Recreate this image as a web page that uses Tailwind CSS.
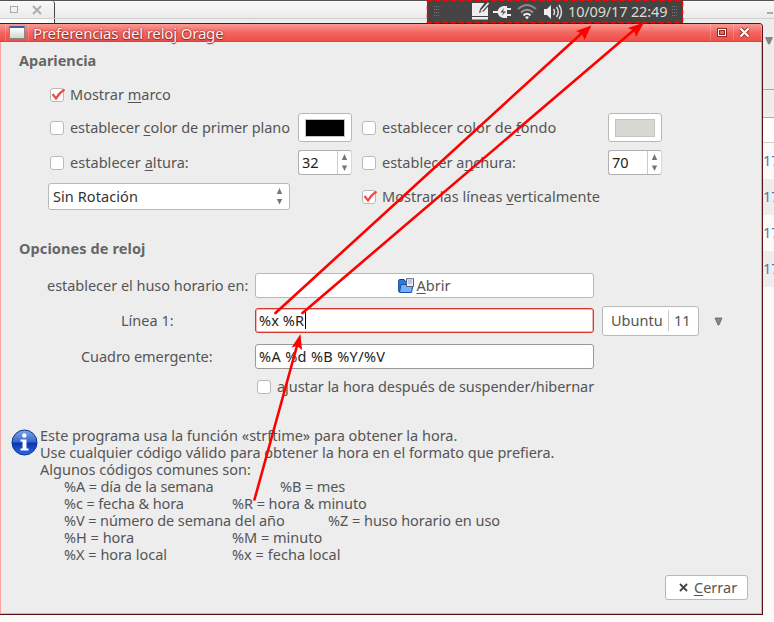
<!DOCTYPE html>
<html lang="es">
<head>
<meta charset="utf-8">
<title>Preferencias del reloj Orage</title>
<script src="https://cdn.jsdelivr.net/npm/@tailwindcss/browser@4"></script>
</head>
<body class="w-[774px] h-[622px] overflow-hidden bg-[#fbfbfb] text-[14.5px] leading-[17px] text-[#555] font-['Noto_Sans','Open_Sans',sans-serif] whitespace-nowrap">
<div class="relative w-[774px] h-[622px] overflow-hidden">

  <!-- windows behind the dialog -->
  <div class="flex flex-col h-[622px]">
    <div class="flex h-[19px] border-t border-[#555] bg-linear-to-b from-[#f9f9f9] to-[#ebebeb] border-b border-b-[#cfcfcf]">
      <div class="flex items-center w-[55px] border-r border-[#444] rounded-tr-[3px]">
        <div class="ml-[10px] w-[8px] h-[7px] border border-[#aaa]"></div>
        <svg class="ml-[14px]" width="10" height="10" viewBox="0 0 10 10" stroke="#aaa" stroke-width="1.8"><path d="M1 1L9 9M9 1L1 9"/></svg>
      </div>
      <div class="ml-auto mt-[11px] mr-[1px] w-[6px] h-[2px] bg-[#aaa]"></div>
    </div>
    <div class="flex flex-1">
      <div class="w-[55px] h-[5px] bg-white border-r border-[#444]"></div>
      <div class="w-[708px] h-[5px] bg-[#ededed]"></div>
      <div class="w-[11px] flex flex-col text-[#5577a0]">
        <div class="h-[71px] bg-[#ededed] border-b border-[#aaa] pt-[18px] pl-[2px]">
          <svg width="8" height="8" viewBox="0 0 8 8"><path d="M.5 .5H7.500L4.500 7H3.500Z" fill="#888" stroke="#666" stroke-width=".6"/></svg>
        </div>
        <div class="h-[28px] bg-[#ededed] border-b border-[#aaa]"></div>
        <div class="h-[25px] bg-white border-b border-[#ccc]"></div>
        <div class="h-[36px] flex items-center pb-px bg-[#fbfbfb] overflow-hidden">17</div>
        <div class="h-[36px] flex items-center pb-px bg-[#ededed] overflow-hidden">17</div>
        <div class="h-[36px] flex items-center pb-px bg-[#fbfbfb] overflow-hidden">17</div>
        <div class="h-[36px] flex items-center pb-px bg-[#ededed] overflow-hidden">17</div>
      </div>
    </div>
  </div>

  <!-- preferences dialog -->
  <div class="absolute left-0 top-[23px] w-[763px] h-[592px] flex flex-col bg-[#ededed] border-t border-r border-b border-[#5a1212] rounded-tr-[4px] overflow-hidden">
    <div class="flex items-center h-[18px] shrink-0 bg-linear-to-b from-[#f99b96] via-[#f3655f] to-[#ee4f48] border-b border-[#d9443e]">
      <div class="ml-[5px] h-[17px] w-[24px] border-x border-white/20 flex items-center pl-[3px]">
        <div class="w-[16px] h-[13px] rounded-[1px] border border-[#888] border-t-2 border-t-[#3465a4] bg-linear-to-b from-white to-[#d5d5d0]"></div>
      </div>
      <span class="ml-[4px] mt-px w-[190px] text-[15px] tracking-[-0.18px] text-[#fff0ee] [text-shadow:0_0_2px_#7d1d18,0_1px_1px_#9c2a24]">Preferencias del reloj Orage</span>
      <div class="ml-auto h-[17px] w-[23px] border-l border-white/20 flex items-center justify-center"><div class="w-[10px] h-[9px] border border-[#8d2a26] bg-white p-px"><div class="w-full h-full border border-[#8d2a26] bg-[#ef625c]"></div></div></div>
      <div class="h-[17px] w-[29px] border-x border-white/20 flex items-center pl-[5px]">
        <svg width="11" height="11" viewBox="0 0 11 11"><path d="M1.500 1.500L9.500 9.500M9.500 1.500L1.500 9.500" stroke="#9c2a24" stroke-width="4"/><path d="M1.500 1.500L9.500 9.500M9.500 1.500L1.500 9.500" stroke="#fff" stroke-width="2.300"/></svg>
      </div>
    </div>

    <div class="flex flex-col flex-1 border-l border-r border-b border-[#fba39f] pl-[18px]">
      <div class="h-[38px] flex items-center pb-[2px] font-bold text-[#666]">Apariencia</div>

      <div class="h-[30px] flex items-center">
        <div class="ml-[31px] w-[14px] h-[14px] rounded-[3px] border border-[#bababa] bg-white"><svg class="overflow-visible" width="12" height="12" viewBox="0 0 12 12" fill="none" stroke="#ee4c47" stroke-width="2.200"><path d="M1.500 5L5 9.500Q8 4 13.500 .5"/></svg></div>
        <span class="ml-[6px] mb-[2px] w-[101px]">Mostrar <u class="underline-offset-2">m</u>arco</span>
      </div>

      <div class="h-[35px] flex items-center">
        <div class="ml-[31px] w-[14px] h-[14px] rounded-[3px] border border-[#bababa] bg-white"></div>
        <span class="ml-[6px] w-[220px] tracking-[-0.06px]">establecer <u class="underline-offset-2">c</u>olor de primer plano</span>
        <div class="ml-[8px] w-[54px] h-[29px] rounded-[3px] border border-[#b8b8b8] bg-white flex items-center justify-center"><div class="w-[40px] h-[18px] border border-[#c5c5c5] bg-black"></div></div>
        <div class="ml-[10px] w-[14px] h-[14px] rounded-[3px] border border-[#bababa] bg-white"></div>
        <span class="ml-[6px] w-[174px] tracking-[0.03px]">establecer color de <u class="underline-offset-2">f</u>ondo</span>
        <div class="ml-[52px] w-[54px] h-[29px] rounded-[3px] border border-[#b8b8b8] bg-white flex items-center justify-center"><div class="w-[40px] h-[18px] border border-[#c5c5c5] bg-[#d8d8d2]"></div></div>
      </div>

      <div class="h-[35px] flex items-center">
        <div class="ml-[31px] w-[14px] h-[14px] rounded-[3px] border border-[#bababa] bg-white"></div>
        <span class="ml-[6px] w-[119px] tracking-[0.04px]">establecer <u class="underline-offset-2">a</u>ltura:</span>
        <div class="ml-[109px] w-[54px] h-[25px] rounded-[3px] border border-[#b0b0b0] border-r-[#d8d8d8] bg-white flex text-[#222]">
          <div class="w-[39px] flex items-center pl-[3px] border-r border-[#ccc]">32</div>
          <svg class="ml-[3px] mt-[3px]" width="7" height="18" viewBox="0 0 7 18" fill="#777"><path d="M3.500 0L6.200 6H.8ZM3.500 17L6.200 11.500H.8Z"/></svg>
        </div>
        <div class="ml-[10px] w-[14px] h-[14px] rounded-[3px] border border-[#bababa] bg-white"></div>
        <span class="ml-[6px] w-[134px]">establecer a<u class="underline-offset-2">n</u>chura:</span>
        <div class="ml-[92px] w-[54px] h-[25px] rounded-[3px] border border-[#b0b0b0] border-r-[#d8d8d8] bg-white flex text-[#222]">
          <div class="w-[39px] flex items-center pl-[3px] border-r border-[#ccc]">70</div>
          <svg class="ml-[3px] mt-[3px]" width="7" height="18" viewBox="0 0 7 18" fill="#777"><path d="M3.500 0L6.200 6H.8ZM3.500 17L6.200 11.500H.8Z"/></svg>
        </div>
      </div>

      <div class="h-[33px] flex items-center">
        <div class="ml-[29px] w-[242px] h-[27px] rounded-[3px] border border-[#b8b8b8] bg-white flex items-center pl-[4px] pr-[6px] text-[#333]">
          <span class="tracking-[0.08px]">Sin Rotación</span>
          <svg class="ml-auto" width="7" height="17" viewBox="0 0 7 17" fill="#777"><path d="M3.500 0L6.200 6H.8ZM3.500 16.500L6.200 11H.8Z"/></svg>
        </div>
        <div class="ml-[72px] w-[14px] h-[14px] rounded-[3px] border border-[#bababa] bg-white"><svg class="overflow-visible" width="12" height="12" viewBox="0 0 12 12" fill="none" stroke="#ee4c47" stroke-width="2.200"><path d="M1.500 5L5 9.500Q8 4 13.500 .5"/></svg></div>
        <span class="ml-[6px] tracking-[0.02px]">Mostrar las líneas <u class="underline-offset-2">v</u>erticalmente</span>
      </div>

      <div class="mt-[21px] h-[30px] flex items-center pb-[2px] font-bold text-[#666] tracking-[0.1px]">Opciones de reloj</div>

      <div class="mt-[3px] h-[37px] flex items-center">
        <span class="ml-[28px] w-[201px] tracking-[-0.03px]">establecer el huso horario en:</span>
        <div class="ml-[7px] w-[339px] h-[25px] rounded-[3px] border border-[#b8b8b8] bg-white flex items-center justify-center gap-[2px]">
          <svg width="17" height="16" viewBox="0 0 17 16"><path d="M.7 13.500V2.500Q.7 1.500 1.700 1.500H6L7.500 3.500H12V13.500Z" fill="#2f78dc" stroke="#0b3f93"/><path d="M1.500 14.500L3 6.500H15L13.500 14.500Z" fill="#74b0fb" stroke="#1650aa"/><path d="M8.500 .7H15.500V8.500H8.500Z" fill="#e8eef5" stroke="#4d6687"/><path d="M10 3H14M10 5H14" stroke="#99a8bd"/></svg>
          <span class="w-[35px]"><u class="underline-offset-2">A</u>brir</span>
        </div>
      </div>

      <div class="h-[34px] flex items-center">
        <span class="ml-[102px] mb-[2px] w-[52px]">Línea 1:</span>
        <div class="ml-[82px] mb-px w-[339px] h-[25px] rounded-[3px] border border-[#d5372f] bg-white shadow-[inset_0_0_0_1px_#f7b5b1] flex items-center pl-[3px] text-[#222]">
          <span class="w-[46px] tracking-[0.1px]">%x %R</span><div class="w-px h-[17px] bg-black"></div>
        </div>
        <div class="ml-[8px] w-[97px] h-[30px] rounded-[3px] border border-[#b8b8b8] bg-white flex items-center pb-px pl-[8px]">
          <span class="w-[51px]">Ubuntu</span>
          <div class="ml-[6px] w-px h-[21px] bg-[#ccc]"></div>
          <span class="ml-[5px] w-[17px]">11</span>
        </div>
        <svg class="ml-[15px]" width="9" height="9" viewBox="0 0 9 9"><path d="M1 1H8L5 8H4Z" fill="#888" stroke="#666" stroke-width=".8"/></svg>
      </div>

      <div class="h-[37px] flex items-center">
        <span class="ml-[62px] w-[132px] tracking-[-0.06px]">Cuadro emergente:</span>
        <div class="ml-[42px] w-[339px] h-[25px] rounded-[3px] border border-[#999] bg-white flex items-center pl-[3px] text-[#222] tracking-[0.35px]">%A %d %B %Y/%V</div>
      </div>

      <div class="h-[24px] flex items-center">
        <div class="ml-[238px] w-[14px] h-[14px] rounded-[3px] border border-[#bababa] bg-white"></div>
        <span class="ml-[6px] mb-px tracking-[-0.06px]">ajustar la hora después de suspender/hibernar</span>
      </div>

      <div class="mt-[28px] -ml-[8px] flex">
        <svg class="mt-[2px] mr-[2px]" width="27" height="27" viewBox="0 0 27 27">
          <defs><linearGradient id="ball" x1="0" y1="0" x2="0" y2="1"><stop offset="0" stop-color="#7fa6e8"/><stop offset=".48" stop-color="#3566cf"/><stop offset=".52" stop-color="#0a35b0"/><stop offset="1" stop-color="#2a6be0"/></linearGradient></defs>
          <circle cx="13.500" cy="13.500" r="12.500" fill="url(#ball)" stroke="#0b2f94"/>
          <circle cx="13.300" cy="6.500" r="2.300" fill="#fff"/><path d="M9.500 10.500H15.500V19.500H17.500V21.500H9.500V19.500H11.500V12.500H9.500Z" fill="#fff"/>
        </svg>
        <div class="flex flex-col">
          <div class="h-[17px] tracking-[-0.02px]">Este programa usa la función «strftime» para obtener la hora.</div>
          <div class="h-[17px] tracking-[-0.045px]">Use cualquier código válido para obtener la hora en el formato que prefiera.</div>
          <div class="h-[17px]">Algunos códigos comunes son:</div>
          <div class="h-[17px] flex pl-[24px] tracking-[-0.12px]"><span class="w-[216px]">%A = día de la semana</span><span>%B = mes</span></div>
          <div class="h-[17px] flex pl-[24px]"><span class="w-[168px] tracking-[-0.12px]">%c = fecha &amp; hora</span><span class="tracking-[-0.06px]">%R = hora &amp; minuto</span></div>
          <div class="h-[17px] flex pl-[24px]"><span class="w-[264px] tracking-[-0.1px]">%V = número de semana del año</span><span class="tracking-[-0.04px]">%Z = huso horario en uso</span></div>
          <div class="h-[17px] flex pl-[24px]"><span class="w-[168px]">%H = hora</span><span>%M = minuto</span></div>
          <div class="h-[17px] flex pl-[24px]"><span class="w-[168px]">%X = hora local</span><span class="tracking-[0.04px]">%x = fecha local</span></div>
        </div>
      </div>

      <div class="mt-[12px] flex justify-end pr-[13px]">
        <div class="w-[83px] h-[25px] rounded-[3px] border border-[#b8b8b8] bg-white flex items-center pl-[13px]">
          <svg class="mb-px" width="9" height="9" viewBox="0 0 9 9" stroke="#444" stroke-width="1.800"><path d="M1 1L8 8M8 1L1 8"/></svg>
          <span class="ml-[6px]"><u class="underline-offset-2">C</u>errar</span>
        </div>
      </div>
    </div>
  </div>

  <!-- system panel with its selection frame -->
  <div class="absolute left-[427px] top-0 w-[256px] h-[23px] bg-[#444] flex items-center text-[#dfdbd2]">
    <svg class="ml-[7px]" width="5" height="12" viewBox="0 0 5 12" stroke="#777" stroke-dasharray="1 2"><path d="M.5 0V12M2.500 0V12M4.500 0V12"/></svg>
    <svg class="ml-[33px] mb-[2px]" width="18" height="18" viewBox="0 0 18 18"><path d="M0 1H12.500L8 7L7 11L10.500 9.500L16 4.500V14H0Z" fill="#eee"/><path d="M0 15H16V17.500H0Z" fill="#eee"/><path d="M16.500 1L10 8.500" fill="none" stroke="#444" stroke-width="4"/><path d="M16.500 1L9 9.500" fill="none" stroke="#eee" stroke-width="1.800"/></svg>
    <svg class="ml-[3px]" width="19" height="12" viewBox="0 0 19 12"><path d="M0 6H5" stroke="#eee" stroke-width="2"/><path d="M14 0V12H10.500Q5 11 4.500 6Q5 1 10.500 0Z" fill="#eee"/><path d="M14 3H18M14 9H18" stroke="#eee" stroke-width="2"/><path d="M11 2L7.500 6.500H10.500L8.500 10L13 5.500H10Z" fill="#444"/></svg>
    <svg class="ml-[5px]" width="20" height="16" viewBox="0 0 20 16" fill="none" stroke-width="2"><path d="M1 5Q10 -3 19 5" stroke="#888"/><path d="M4 8.500Q10 3 16 8.500" stroke="#999"/><path d="M6.500 11.500Q10 8 13.500 11.500" stroke="#eee"/><path d="M8 13L10 15.500L12 13Q10 11.500 8 13Z" fill="#eee" stroke="none"/></svg>
    <svg class="ml-[7px]" width="19" height="16" viewBox="0 0 19 16"><path d="M0 5H3L7 1V15L3 11H0Z" fill="#eee"/><path d="M9.500 5Q11.500 8 9.500 11M12.500 3Q16 8 12.500 13M15 1Q20 8 15 15" fill="none" stroke="#ddd" stroke-width="1.500"/></svg>
    <span class="ml-[5px] w-[98px] tracking-[-0.15px]">10/09/17 22:49</span>
    <svg class="ml-[6px]" width="5" height="12" viewBox="0 0 5 12" stroke="#777" stroke-dasharray="1 2"><path d="M.5 0V12M2.500 0V12M4.500 0V12"/></svg>
  </div>

  <!-- annotation frame and arrows -->
  <svg class="absolute left-0 top-0 pointer-events-none" width="774" height="622" viewBox="0 0 774 622">
    <rect x="427.500" y=".5" width="255" height="22" fill="none" stroke="#f00" stroke-width="1.500" stroke-dasharray="5 3"/>
    <g stroke="#f00" stroke-width="2.600" stroke-linecap="round"><path d="M275.500 313L582 33"/><path d="M302.500 313L634 30"/><path d="M254.500 499.500L297.500 344"/></g>
    <g fill="#f00"><path d="M591.500 25.500L584.500 40L582 34L576 31Z"/><path d="M644 22.500L636 37L634 30.500L628 28Z"/><path d="M300.500 334L302 350L297 346L291.500 347.500Z"/></g>
  </svg>
</div>
</body>
</html>
